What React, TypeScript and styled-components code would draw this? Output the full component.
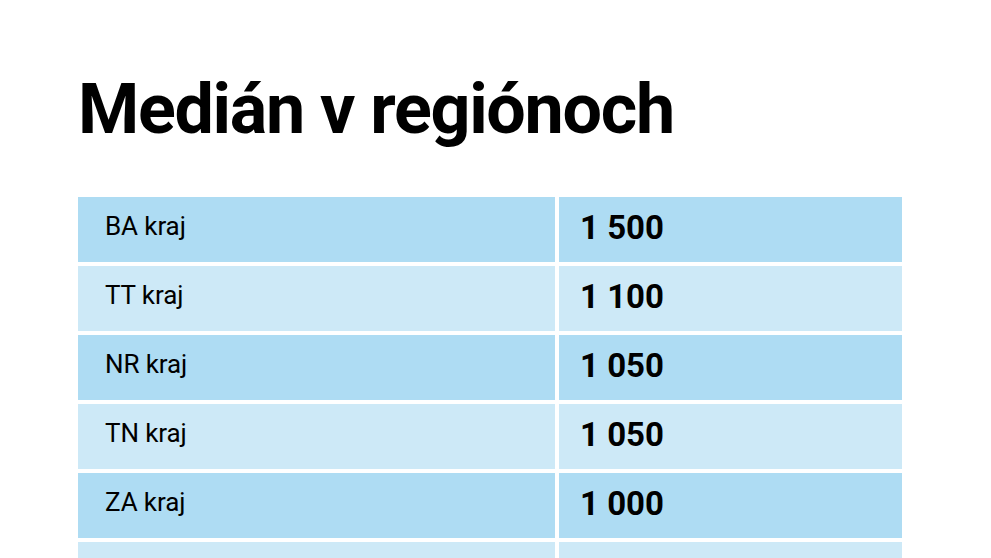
import React from 'react'
import styled, { createGlobalStyle } from 'styled-components'

const GlobalStyle = createGlobalStyle`
  html, body {
    margin: 0;
    padding: 0;
    background: #ffffff;
    font-family: Roboto, 'Liberation Sans', sans-serif;
    color: #000000;
  }
`

const Page = styled.div`
  padding: 68px 89px 0 78px;
  height: 558px;
  box-sizing: border-box;
  overflow: hidden;
`

const Title = styled.h1`
  margin: 0 0 47px 0;
  font-size: 70px;
  font-weight: 700;
  line-height: 82px;
  letter-spacing: -1.3px;
`

const Table = styled.div`
  display: grid;
  grid-template-columns: 477px 1fr;
  column-gap: 4px;
  row-gap: 4px;
`

const Cell = styled.div<{ $shade: 'dark' | 'light' }>`
  height: 65px;
  display: flex;
  align-items: center;
  box-sizing: border-box;
  padding-bottom: 8px;
  background: ${({ $shade }) => ($shade === 'dark' ? '#aedcf3' : '#cde9f7')};
`

const Label = styled(Cell)`
  padding-left: 27px;
  font-size: 26px;
  font-weight: 400;
  letter-spacing: -0.1px;
`

const Value = styled(Cell)`
  padding-left: 21px;
  padding-bottom: 4px;
  font-size: 33px;
  font-weight: 700;
`

const rows = [
  { region: 'BA kraj', median: '1 500' },
  { region: 'TT kraj', median: '1 100' },
  { region: 'NR kraj', median: '1 050' },
  { region: 'TN kraj', median: '1 050' },
  { region: 'ZA kraj', median: '1 000' },
  { region: 'KE kraj', median: '1 000' },
]

const App = () => (
  <>
    <GlobalStyle />
    <Page>
      <Title>Medián v regiónoch</Title>
      <Table>
        {rows.map((row, i) => {
          const shade = i % 2 === 0 ? 'dark' : 'light'
          return (
            <React.Fragment key={row.region}>
              <Label $shade={shade}>{row.region}</Label>
              <Value $shade={shade}>{row.median}</Value>
            </React.Fragment>
          )
        })}
      </Table>
    </Page>
  </>
)

export default App
